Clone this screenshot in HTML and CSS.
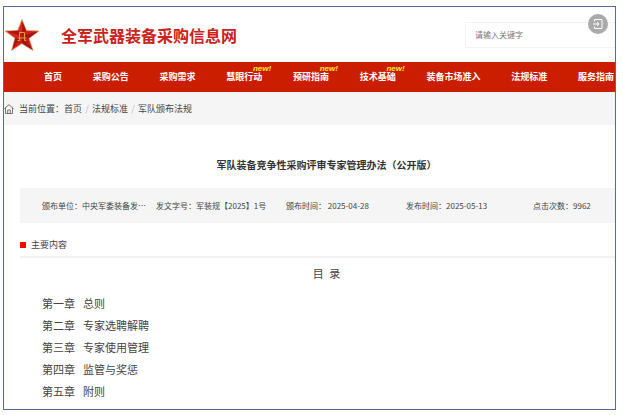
FILE: index.html
```html
<!DOCTYPE html>
<html lang="zh-CN">
<head>
  <meta charset="UTF-8" />
  <meta name="viewport" content="width=device-width, initial-scale=1.0"/>
  <title>全军武器装备采购信息网</title>
  <link rel="stylesheet" href="styles.css">
</head>
<body>

<div class="page">
  <header class="header">
    <svg class="emblem" viewBox="0 0 36 34" aria-hidden="true">
      <defs>
        <linearGradient id="star-red" x1="0" y1="0" x2="1" y2="1">
          <stop offset="0" stop-color="#e8332a"/>
          <stop offset="1" stop-color="#b81010"/>
        </linearGradient>
      </defs>
      <path d="M18 1.5 L22.4 12.5 L35 13 L25 20.2 L29 32.5 L18 25.6 L7.5 32.5 L11 20.2 L1 13 L13.6 12.5 Z" fill="url(#star-red)" stroke="#d9a05a" stroke-width=".8"/>
      <path d="M18 3 V18 L22.4 12.5 Z M34 13.5 L18 18 L25 20.2 Z M28 31.5 L18 18 V25.6 Z M8.500 31 L18 18 L11 20.2 Z M2.5 13.5 L18 18 L13.6 12.5 Z" fill="#8c0b0b" opacity=".6"/>
      <path d="M15.5 14.5 H20.5 V20 M15.5 14.5 V20 M13.5 20 H22 M15.5 20 V22.5 H13.5 M20.5 20 V22.5 H22" fill="none" stroke="#e0a030" stroke-width="1"/>
    </svg>
    <h1 class="site-name">全军武器装备采购信息网</h1>
    <input class="search" type="text" placeholder="请输入关键字" aria-label="请输入关键字">
    <button class="exit" type="button" aria-label="进入">
      <svg viewBox="0 0 20 20" aria-hidden="true">
        <path d="M6.5 7.5 V5.5 H14 V14.5 H6.5 V12.5 M5 10 H11 M9 8 L11 10 L9 12" fill="none" stroke="#fff" stroke-width="1"/>
      </svg>
    </button>
  </header>

  <nav class="nav">
    <a href="#">首页</a>
    <a href="#">采购公告</a>
    <a href="#">采购需求</a>
    <a href="#">慧眼行动<span class="new">new!</span></a>
    <a href="#">预研指南<span class="new">new!</span></a>
    <a href="#">技术基础<span class="new">new!</span></a>
    <a href="#">装备市场准入</a>
    <a href="#">法规标准</a>
    <a href="#">服务指南</a>
  </nav>

  <div class="crumbs">
    <svg class="home" viewBox="0 0 10 10" aria-hidden="true">
      <path d="M.5 4.5 L5 .7 L9.5 4.5 M1.5 4 V9.5 H8.5 V4 M3.7 9.5 V6 H6.3 V9.5" fill="none" stroke="#555" stroke-width=".8"/>
    </svg>
    <span>当前位置：</span>
    <a href="#">首页</a>
    <span class="slash">/</span>
    <a href="#">法规标准</a>
    <span class="slash">/</span>
    <a href="#">军队颁布法规</a>
  </div>

  <main class="article">
    <h2 class="title">军队装备竞争性采购评审专家管理办法（公开版）</h2>

    <div class="meta">
      <span>颁布单位：中央军委装备发…</span>
      <span>发文字号：军装规【2025】1号</span>
      <span>颁布时间： 2025-04-28</span>
      <span>发布时间：2025-05-13</span>
      <span>点击次数：9962</span>
    </div>

    <h3 class="section">主要内容</h3>

    <p class="toc-title">目&ensp;录</p>
    <ul class="toc">
      <li><span>第一章</span><span>总则</span></li>
      <li><span>第二章</span><span>专家选聘解聘</span></li>
      <li><span>第三章</span><span>专家使用管理</span></li>
      <li><span>第四章</span><span>监管与奖惩</span></li>
      <li><span>第五章</span><span>附则</span></li>
    </ul>
  </main>
</div>

</body>
</html>
```
FILE: styles.css
```css
* {
  box-sizing: border-box;
}

body {
  margin: 6px 7px 5px 3px;
  background: #fff;
  color: #444;
  font-family: "Noto Sans CJK SC", sans-serif;
  font-size: 9px;
}

h1, h2, h3, p, ul {
  margin: 0;
  padding: 0;
}

a {
  color: inherit;
  text-decoration: none;
}

.page {
  border: 1px solid #566a94;
  overflow: hidden;
}

/* 顶部 */
.header {
  position: relative;
  display: flex;
  align-items: center;
  height: 55px;
}

.emblem {
  width: 36px;
  height: 34px;
}

.site-name {
  margin-left: 21px;
  color: #c9231c;
  font-size: 16px;
  line-height: 24px;
}

.search {
  width: 150px;
  height: 26px;
  margin-left: auto;
  padding: 0 9px;
  border: 1px solid #f3f3f3;
  border-right: 0;
  background: #fff;
  font-family: inherit;
  font-size: 8px;
}

.search::placeholder {
  color: #777;
}

.exit {
  position: absolute;
  top: 7px;
  right: 7px;
  width: 20px;
  height: 20px;
  padding: 0;
  border: 0;
  border-radius: 50%;
  background: #aaa;
}

.exit svg {
  display: block;
}

/* 导航 */
.nav {
  display: flex;
  justify-content: space-between;
  align-items: center;
  height: 30px;
  padding: 0 1px 0 40px;
  background: #cb1e00;
  color: #fff;
  font-weight: bold;
  line-height: 12px;
  white-space: nowrap;
}

.nav a {
  position: relative;
}

.new {
  position: absolute;
  top: -6px;
  right: -9px;
  color: #ffe832;
  font-family: "Liberation Sans", sans-serif;
  font-size: 8px;
  font-style: italic;
  line-height: 8px;
}

/* 当前位置 */
.crumbs {
  display: flex;
  align-items: center;
  height: 33px;
  background: #f5f5f5;
}

.home {
  width: 10px;
  height: 10px;
  margin-right: 5px;
}

.slash {
  width: 10px;
  color: #bbb;
  text-align: center;
}

/* 正文 */
.article {
  padding: 32px 0 7px 16px;
}

.title {
  padding-left: 18px;
  color: #333;
  font-size: 10px;
  line-height: 16px;
  text-align: center;
}

.meta {
  display: grid;
  grid-template-columns: 114fr 130fr 120fr 127fr 82fr;
  align-items: center;
  height: 35px;
  margin-top: 15px;
  padding-left: 22px;
  background: #f5f5f5;
  font-size: 8px;
  white-space: nowrap;
}

.section {
  display: flex;
  align-items: center;
  height: 35px;
  padding-top: 10px;
  border-bottom: 2px solid #f2f2f2;
  font-size: 9px;
  font-weight: normal;
}

.section::before {
  content: "";
  width: 6px;
  height: 6px;
  margin-right: 5px;
  background: #f00;
}

.toc-title {
  margin-top: 4px;
  padding-left: 18px;
  font-size: 11px;
  line-height: 22px;
  text-align: center;
}

.toc {
  margin-top: 8px;
  padding-left: 22px;
  font-size: 11px;
  line-height: 22px;
  list-style: none;
}

.toc li {
  display: flex;
  gap: 8px;
}
```
